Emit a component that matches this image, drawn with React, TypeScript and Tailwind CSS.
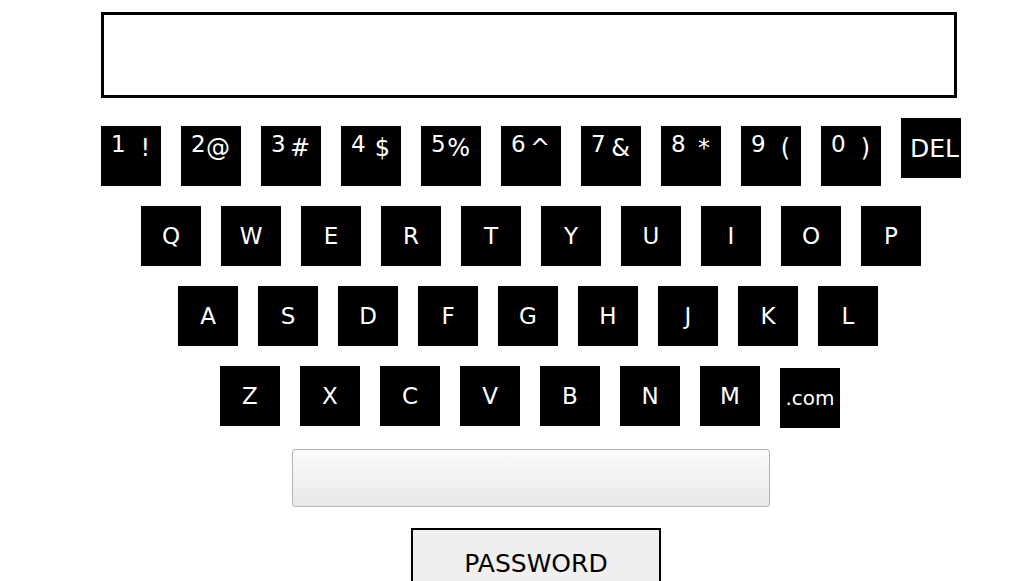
import React from 'react'

const numberKeys = [
  { digit: '1', symbol: '!' },
  { digit: '2', symbol: '@' },
  { digit: '3', symbol: '#' },
  { digit: '4', symbol: '$' },
  { digit: '5', symbol: '%' },
  { digit: '6', symbol: '^' },
  { digit: '7', symbol: '&' },
  { digit: '8', symbol: '*' },
  { digit: '9', symbol: '(' },
  { digit: '0', symbol: ')' },
]

const rowOne = ['Q', 'W', 'E', 'R', 'T', 'Y', 'U', 'I', 'O', 'P']
const rowTwo = ['A', 'S', 'D', 'F', 'G', 'H', 'J', 'K', 'L']
const rowThree = ['Z', 'X', 'C', 'V', 'B', 'N', 'M']

function LetterKey({ label }: { label: string }) {
  return (
    <button className="w-[60px] h-[60px] bg-black text-white text-[23px] leading-[27px] flex items-center justify-center pt-[1px]">
      {label}
    </button>
  )
}

export default function App() {
  return (
    <div className="bg-white flex flex-col items-start font-['DejaVu_Sans',sans-serif] overflow-hidden h-[581px]">
      <div className="mt-[12px] ml-[101px] w-[856px] h-[86px] border-[3px] border-black bg-white shrink-0"></div>

      <div className="mt-[20px] pl-[101px] flex items-start gap-5 shrink-0">
        {numberKeys.map((k) => (
          <button
            key={k.digit}
            className="mt-2 w-[60px] h-[60px] bg-black text-white text-[23px] leading-[27px] flex items-start justify-between pl-[10px] pr-[11px] pt-[5px]"
          >
            <span>{k.digit}</span>
            <span className="mt-[4px] text-[24px]">{k.symbol}</span>
          </button>
        ))}
        <button className="w-[60px] h-[60px] bg-black text-white text-[25px] leading-[29px] flex items-center justify-start pl-[9px]">
          DEL
        </button>
      </div>

      <div className="mt-[20px] pl-[141px] flex gap-5 shrink-0">
        {rowOne.map((l) => (
          <LetterKey key={l} label={l} />
        ))}
      </div>

      <div className="mt-[20px] pl-[178px] flex gap-5 shrink-0">
        {rowTwo.map((l) => (
          <LetterKey key={l} label={l} />
        ))}
      </div>

      <div className="mt-[20px] pl-[220px] flex items-start gap-5 shrink-0">
        {rowThree.map((l) => (
          <LetterKey key={l} label={l} />
        ))}
        <button className="mt-[2px] w-[60px] h-[60px] bg-black text-white text-[20px] leading-[24px] flex items-center justify-center">
          .com
        </button>
      </div>

      <div className="mt-[21px] ml-[292px] w-[478px] h-[58px] rounded-[3px] border border-[#b4b4b4] bg-gradient-to-b from-[#fbfbfb] to-[#e9e8e7] shrink-0"></div>

      <button className="mt-[21px] ml-[411px] w-[250px] h-[71px] border-2 border-black bg-[#f0efee] text-black text-[25px] leading-[29px] flex items-center justify-center shrink-0">
        PASSWORD
      </button>
    </div>
  )
}
